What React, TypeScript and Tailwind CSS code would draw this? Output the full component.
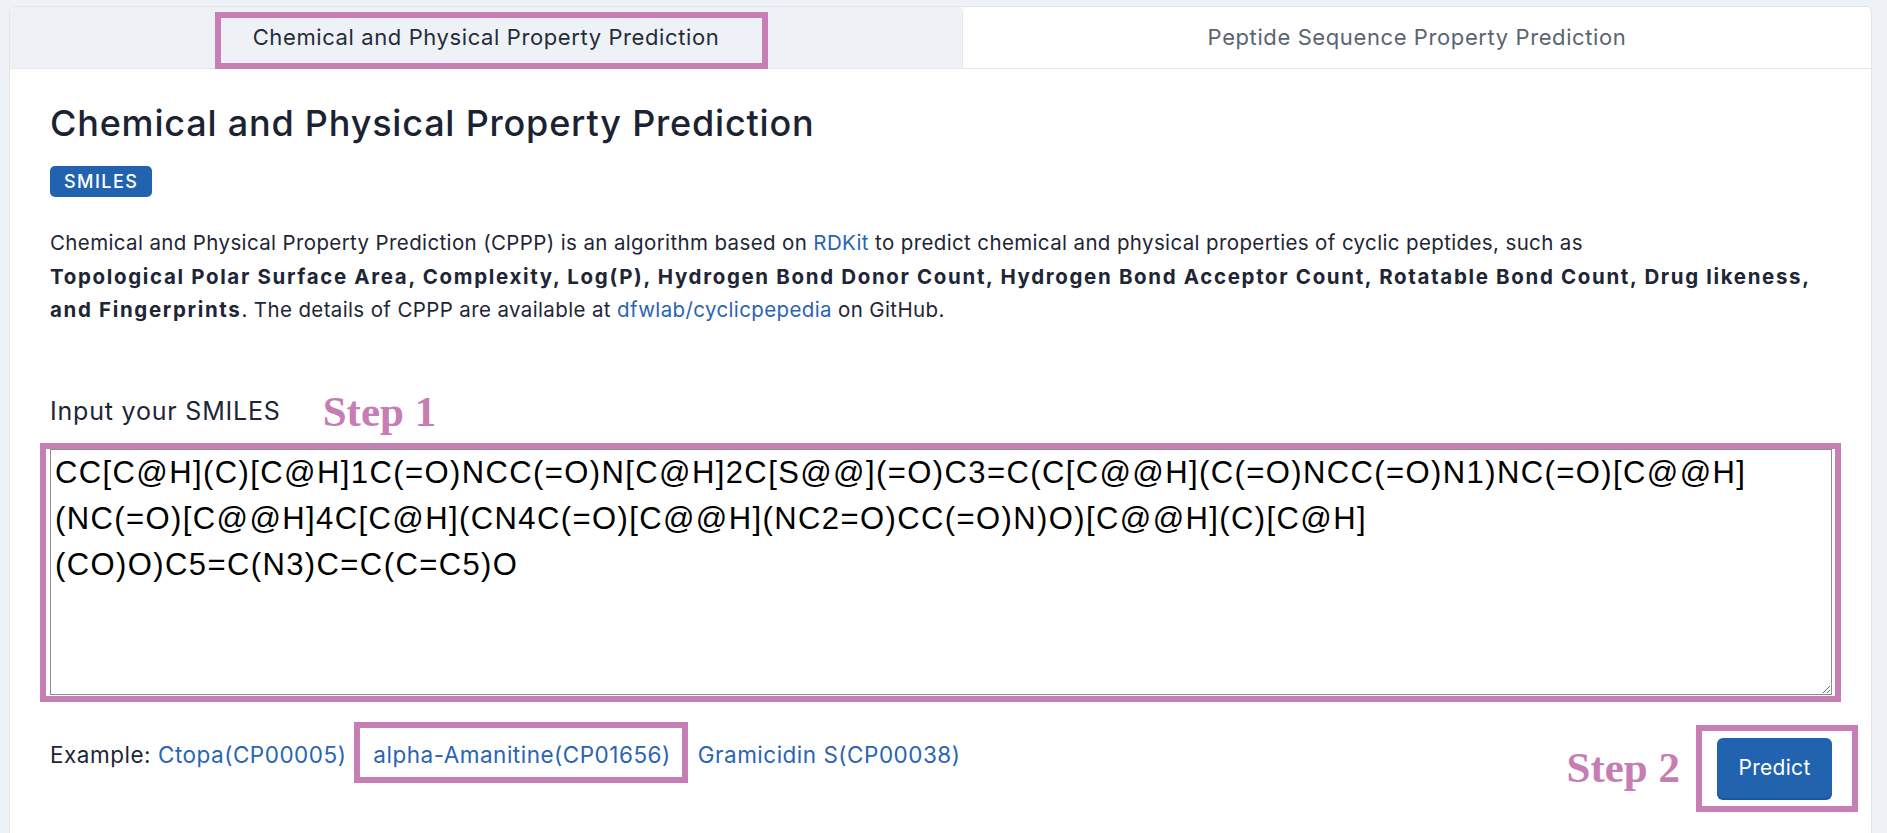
import { useState } from "react";

const SMILES_EXAMPLE =
  "CC[C@H](C)[C@H]1C(=O)NCC(=O)N[C@H]2C[S@@](=O)C3=C(C[C@@H](C(=O)NCC(=O)N1)NC(=O)[C@@H](NC(=O)[C@@H]4C[C@H](CN4C(=O)[C@@H](NC2=O)CC(=O)N)O)[C@@H](C)[C@H](CO)O)C5=C(N3)C=C(C=C5)O";

const examples = [
  { name: "Ctopa(CP00005)", boxed: false },
  { name: "alpha-Amanitine(CP01656)", boxed: true },
  { name: "Gramicidin S(CP00038)", boxed: false },
];

// pink annotation frame drawn over the screenshot
function Frame({ className }: { className: string }) {
  return (
    <span
      className={`pointer-events-none absolute border-[6px] border-[#c77eb4] ${className}`}
    />
  );
}

export default function App() {
  const [smiles, setSmiles] = useState(SMILES_EXAMPLE);

  return (
    <div
      className="h-screen overflow-hidden bg-[#eef1f6] pt-[6px] pl-[9px] pr-[15px] text-[#1e2636]"
      style={{ fontFamily: "Inter, 'Noto Sans', sans-serif" }}
    >
      <div className="rounded-t-[6px] border border-[#e1e5ea] bg-white pb-[60px]">
        {/* tabs */}
        <div className="flex h-[62px] border-b border-[#e3e6ea]">
          <div className="relative flex w-[952px] items-center justify-center rounded-tl-[6px] bg-[#eef2f7] text-[22px] tracking-[0.6px] text-[#242c3a]">
            Chemical and Physical Property Prediction
            <Frame className="left-[205px] top-[5px] h-[57px] w-[553px]" />
          </div>
          <div className="flex flex-1 items-center justify-center rounded-tl-[6px] border-l border-[#e3e6ea] text-[22px] tracking-[0.6px] text-[#5b6472]">
            Peptide Sequence Property Prediction
          </div>
        </div>

        <div className="pl-[40px] pr-[39px] pt-[34px]">
          <h3 className="text-[36px] leading-[40px] font-medium tracking-[0.8px] text-[#1b2333]">
            Chemical and Physical Property Prediction
          </h3>
          <span className="mt-[23px] inline-flex h-[31px] items-center rounded-[5px] bg-[#2263b0] px-[14px] text-[18px] font-medium tracking-[0.08em] text-white">
            SMILES
          </span>

          <p className="mt-[29px] text-[20.5px] leading-[33.5px] tracking-[0.37px]">
            Chemical and Physical Property Prediction (CPPP) is an algorithm
            based on <a className="text-[#2a64b3]">RDKit</a> to predict chemical
            and physical properties of cyclic peptides, such as
            <br />
            <b className="font-bold tracking-[1.65px]">
              Topological Polar Surface Area, Complexity, Log(P), Hydrogen Bond
              Donor Count, Hydrogen Bond Acceptor Count, Rotatable Bond Count,
              Drug likeness, and Fingerprints
            </b>
            . The details of CPPP are available at{" "}
            <a className="text-[#2a64b3]">dfwlab/cyclicpepedia</a> on GitHub.
          </p>

          <div className="mt-[65px] flex h-[40px] items-center">
            <label className="text-[25px] tracking-[0.8px]">
              Input your SMILES
            </label>
            <span
              className="ml-[42px] text-[43px] font-bold leading-none text-[#c67db3]"
              style={{ fontFamily: "'Liberation Serif', serif" }}
            >
              Step 1
            </span>
          </div>

          <div className="relative mt-[17px]">
            <textarea
              value={smiles}
              onChange={(e) => setSmiles(e.target.value)}
              className="block h-[246px] w-full border border-[#8c8c8c] bg-white pl-[4px] pr-[50px] pt-0 text-[31px] leading-[46px] tracking-[1.4px] text-black outline-none"
              style={{ fontFamily: "'Liberation Sans', Arial, sans-serif" }}
            />
            <Frame className="-left-[10px] -right-[9px] -top-[6px] -bottom-[7px]" />
          </div>

          <div className="mt-[43px] flex items-start justify-between">
            <div className="flex items-center text-[22.5px] leading-[33px] tracking-[0.5px]">
              <span className="mr-[7px]">Example:</span>
              {examples.map((ex) => (
                <span key={ex.name} className="relative mr-[27px]">
                  <a className="cursor-pointer text-[#2a64b3]">{ex.name}</a>
                  {ex.boxed && (
                    <Frame className="-left-[19px] -right-[17px] -top-[16px] -bottom-[12px]" />
                  )}
                </span>
              ))}
            </div>
            <div className="flex items-center">
              <span
                className="text-[43px] font-bold leading-none text-[#c67db3]"
                style={{ fontFamily: "'Liberation Serif', serif" }}
              >
                Step 2
              </span>
              <div className="relative ml-[37px]">
                <button
                  type="button"
                  className="h-[60px] w-[115px] rounded-[6px] bg-[#2263b0] text-[21px] tracking-[0.3px] text-white shadow-[0_2px_0_#1b559c]"
                >
                  Predict
                </button>
                <Frame className="-left-[21px] -right-[26px] -top-[13px] -bottom-[14px]" />
              </div>
            </div>
          </div>
        </div>
      </div>
    </div>
  );
}
